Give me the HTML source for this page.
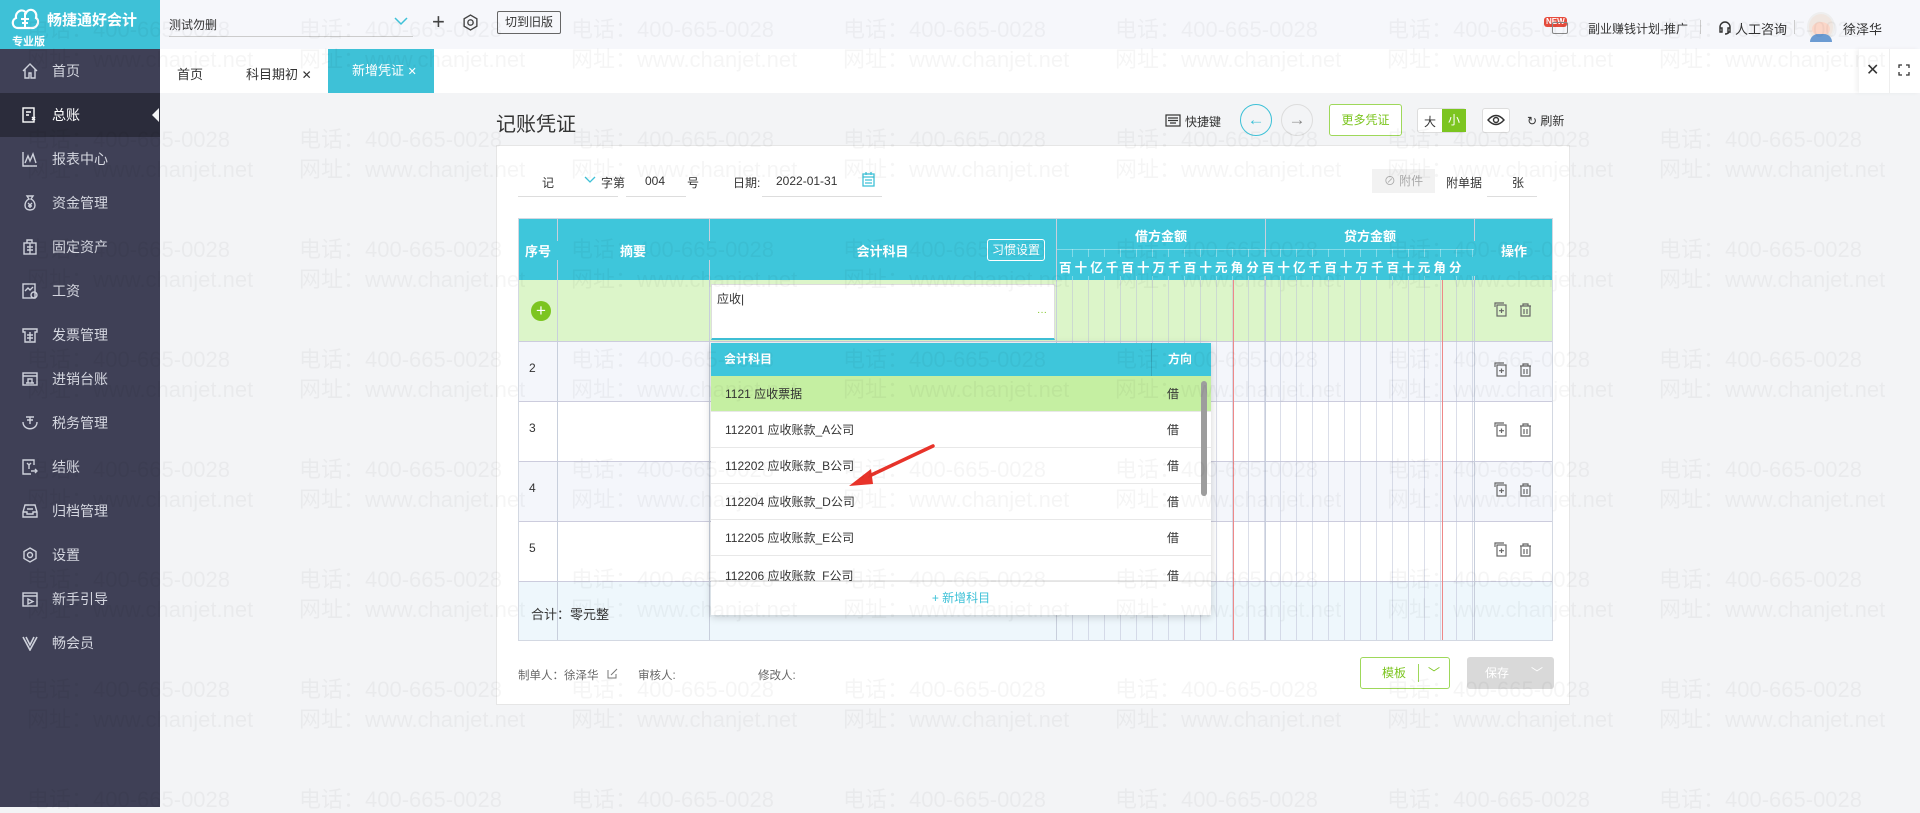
<!DOCTYPE html>
<html><head><meta charset="utf-8"><style>
*{margin:0;padding:0;box-sizing:border-box}
body{width:1920px;height:807px;overflow:hidden;background:#f3f4f6;font-family:"Liberation Sans","Noto Sans CJK SC",sans-serif;font-size:13px;color:#333;position:relative}
.a{position:absolute}
.side{left:0;top:0;width:160px;height:807px;background:#3f4056}
.logo{left:0;top:0;width:160px;height:49px;background:#3ec1d7;color:#fff}
.mi{position:absolute;left:0;width:160px;height:44px;color:#d5d7e0;font-size:14px;line-height:44px;padding-left:52px}
.mi svg{position:absolute;left:22px;top:14px}
.mi.act{background:#2b2c3b;color:#fff}
.top{left:160px;top:0;width:1760px;height:49px;background:#f6f7fb}
.tabs{left:160px;top:49px;width:1760px;height:44px;background:#fff}
.card{left:496px;top:145px;width:1074px;height:560px;background:#fff;border:1px solid #e6e6e6}
.th{background:#3ec6db;color:#fff;font-weight:bold;font-size:13px;text-align:center}
.vl{position:absolute;top:0;bottom:0;width:1px;background:#d3d8e2}
.wr{position:absolute;left:27px;white-space:nowrap;pointer-events:none;color:rgba(0,0,0,0.04);font-size:22px;line-height:26px}
.wr span{display:inline-block;width:272px}
.dr{position:absolute;left:0;width:500px;height:36px;border-bottom:1px solid #e8e8e8;font-size:12px;line-height:36px;padding-left:14px}
.dr b{position:absolute;left:456px;font-weight:normal}
</style></head><body>

<div class="a side"></div>
<div class="a logo">
 <svg class="a" style="left:10px;top:4px" width="30" height="28" viewBox="0 0 30 28"><path d="M8 24 C2 24 1 16 6 14 C5 7 13 4 16 9 C19 3 28 6 26 14 C30 16 28 24 22 24 Z" fill="none" stroke="#fff" stroke-width="2.2"/><path d="M15 9 V24 M11 15 H19 M12 19 H18" stroke="#fff" stroke-width="2"/></svg>
 <div class="a" style="left:47px;top:9px;font-size:15px;font-weight:bold">畅捷通好会计</div>
 <div class="a" style="left:12px;top:33px;font-size:11px;font-weight:bold">专业版</div>
</div>
<div class="mi" style="top:49px"><svg width="16" height="16" viewBox="0 0 16 16" fill="none" stroke="#cfd2dc" stroke-width="1.4"><path d="M1 8 L8 1 L15 8 M3 6 V15 H7 V10 H9 V15 H13 V6"/></svg>首页</div>
<div class="mi act" style="top:93px"><svg width="16" height="16" viewBox="0 0 16 16" fill="none" stroke="#fff" stroke-width="1.4"><rect x="1" y="1" width="11" height="14"/><path d="M4 5H9M4 8H7M10 10l3 3M13 10l-3 3"/></svg>总账</div>
<div class="a" style="left:152px;top:108px;width:0;height:0;border:7px solid transparent;border-right-color:#f3f4f6;border-left:0"></div>
<div class="mi" style="top:137px"><svg width="16" height="16" viewBox="0 0 16 16" fill="none" stroke="#cfd2dc" stroke-width="1.4"><path d="M1 1V15H15M3 12L6 5L8 10L11 3L14 12"/></svg>报表中心</div>
<div class="mi" style="top:181px"><svg width="16" height="16" viewBox="0 0 16 16" fill="none" stroke="#cfd2dc" stroke-width="1.4"><path d="M5 1H11L9 4C14 6 15 15 8 15C1 15 2 6 7 4Z M6 8L8 10L10 8M8 10V13M6 11H10"/></svg>资金管理</div>
<div class="mi" style="top:225px"><svg width="16" height="16" viewBox="0 0 16 16" fill="none" stroke="#cfd2dc" stroke-width="1.4"><rect x="2" y="4" width="12" height="11"/><path d="M5 4V1H10V4M5 8H11M5 11H11M8 4V15"/></svg>固定资产</div>
<div class="mi" style="top:269px"><svg width="16" height="16" viewBox="0 0 16 16" fill="none" stroke="#cfd2dc" stroke-width="1.4"><rect x="1" y="1" width="12" height="14"/><path d="M3 8L6 5L8 7L11 4"/><circle cx="12" cy="12" r="3"/></svg>工资</div>
<div class="mi" style="top:313px"><svg width="16" height="16" viewBox="0 0 16 16" fill="none" stroke="#cfd2dc" stroke-width="1.4"><path d="M1 2H15V5H13V15H3V5H1Z M5 8H11M5 11H11M8 5V14"/></svg>发票管理</div>
<div class="mi" style="top:357px"><svg width="16" height="16" viewBox="0 0 16 16" fill="none" stroke="#cfd2dc" stroke-width="1.4"><rect x="1" y="2" width="14" height="12"/><path d="M1 5H15M4 12H12M6 12V8H10V12"/></svg>进销台账</div>
<div class="mi" style="top:401px"><svg width="16" height="16" viewBox="0 0 16 16" fill="none" stroke="#cfd2dc" stroke-width="1.4"><path d="M1 7C1 16 15 16 15 7M4 2H12M8 2V9M5 5H11"/></svg>税务管理</div>
<div class="mi" style="top:445px"><svg width="16" height="16" viewBox="0 0 16 16" fill="none" stroke="#cfd2dc" stroke-width="1.4"><path d="M12 6V1H1V15H9M5 4L7 6L9 4M7 6V10M9 12H15M13 10L15 12L13 14"/></svg>结账</div>
<div class="mi" style="top:489px"><svg width="16" height="16" viewBox="0 0 16 16" fill="none" stroke="#cfd2dc" stroke-width="1.4"><path d="M3 2H13L15 9V14H1V9Z M1 9H5V11H11V9H15M5 6H11"/></svg>归档管理</div>
<div class="mi" style="top:533px"><svg width="16" height="16" viewBox="0 0 16 16" fill="none" stroke="#cfd2dc" stroke-width="1.4"><path d="M8 1L14 4.5V11.5L8 15L2 11.5V4.5Z"/><circle cx="8" cy="8" r="2.5"/></svg>设置</div>
<div class="mi" style="top:577px"><svg width="16" height="16" viewBox="0 0 16 16" fill="none" stroke="#cfd2dc" stroke-width="1.4"><rect x="1" y="2" width="14" height="13"/><path d="M1 5H15M6 8V13L11 10.5Z"/></svg>新手引导</div>
<div class="mi" style="top:621px"><svg width="16" height="16" viewBox="0 0 16 16" fill="none" stroke="#cfd2dc" stroke-width="1.6"><path d="M1 2L8 15L15 2M4 2L8 10L12 2"/></svg>畅会员</div>

<div class="a top"></div>
<div class="a" style="left:169px;top:16px;font-size:12px">测试勿删</div>
<div class="a" style="left:169px;top:36px;width:244px;height:1px;background:#ccc"></div>
<svg class="a" style="left:394px;top:16px" width="14" height="10" viewBox="0 0 14 10"><path d="M1 2L7 8L13 2" fill="none" stroke="#3ec1d7" stroke-width="1.5"/></svg>
<div class="a" style="left:432px;top:9px;font-size:22px;color:#444;font-weight:300">+</div>
<svg class="a" style="left:462px;top:14px" width="17" height="17" viewBox="0 0 16 16" fill="none" stroke="#444" stroke-width="1.3"><path d="M8 1L14 4.5V11.5L8 15L2 11.5V4.5Z"/><circle cx="8" cy="8" r="2.5"/></svg>
<div class="a" style="left:497px;top:11px;width:64px;height:23px;border:1px solid #666;border-radius:2px;font-size:12px;line-height:21px;text-align:center">切到旧版</div>

<div class="a" style="left:1544px;top:17px;background:#e64b3c;color:#fff;font-size:8px;font-weight:bold;padding:0 2px;border-radius:3px;line-height:10px">NEW</div>
<div class="a" style="left:1552px;top:22px;width:16px;height:12px;border:1.5px solid #888;border-radius:2px"></div>
<div class="a" style="left:1588px;top:20px;font-size:12px;color:#333">副业赚钱计划-推广</div>
<div class="a" style="left:1700px;top:20px;width:1px;height:14px;background:#ccc"></div>
<svg class="a" style="left:1718px;top:21px" width="14" height="14" viewBox="0 0 14 14" fill="none" stroke="#333" stroke-width="1.4"><path d="M2 8V6A5 5 0 0 1 12 6V8M2 7H4V11H2ZM10 7H12V11H10Z M11 11Q10 13 7 13"/></svg>
<div class="a" style="left:1735px;top:19px;font-size:13px">人工咨询</div>
<div class="a" style="left:1794px;top:20px;width:1px;height:14px;background:#ccc"></div>
<div class="a" style="left:1807px;top:12px;width:28px;height:30px;border-radius:50%;background:#f0e6e0;border:2px solid #eee"></div>
<div class="a" style="left:1812px;top:22px;width:18px;height:14px;border-radius:50%;background:#fbd6c8"></div>
<div class="a" style="left:1810px;top:34px;width:22px;height:8px;border-radius:8px 8px 0 0;background:#6b9bd2"></div>
<div class="a" style="left:1843px;top:19px;font-size:13px">徐泽华</div>

<div class="a tabs"></div>
<div class="a" style="left:177px;top:64px;font-size:13px">首页</div>
<div class="a" style="left:246px;top:64px;font-size:13px">科目期初 <span style="font-size:12px">✕</span></div>
<div class="a" style="left:328px;top:49px;width:106px;height:44px;background:#3ec1d7;color:#fff;font-size:13px;line-height:44px;padding-left:24px">新增凭证 <span style="font-size:11px">✕</span></div>
<div class="a" style="left:1859px;top:49px;width:61px;height:44px;background:#fff;box-shadow:-3px 0 4px rgba(0,0,0,0.05)"></div>
<div class="a" style="left:1889px;top:49px;width:1px;height:44px;background:#eee"></div>
<div class="a" style="left:1866px;top:60px;font-size:16px;color:#333">✕</div>
<svg class="a" style="left:1898px;top:64px" width="12" height="12" viewBox="0 0 12 12" fill="none" stroke="#333" stroke-width="1.3"><path d="M1 4V1H4M8 1H11V4M11 8V11H8M4 11H1V8"/></svg>

<div class="a" style="left:496px;top:108px;font-size:20px;color:#333">记账凭证</div>
<svg class="a" style="left:1165px;top:114px" width="16" height="13" viewBox="0 0 16 13" fill="none" stroke="#333" stroke-width="1.2"><rect x="1" y="1" width="14" height="11"/><path d="M3 4H13M3 6.5H13M5 9H11"/></svg>
<div class="a" style="left:1185px;top:113px;font-size:12px">快捷键</div>
<div class="a" style="left:1240px;top:104px;width:32px;height:32px;border:1.5px solid #3ec1d7;border-radius:50%;color:#3ec1d7;text-align:center;line-height:29px;font-size:17px">←</div>
<div class="a" style="left:1281px;top:104px;width:32px;height:32px;border:1px solid #ddd;border-radius:50%;color:#888;text-align:center;line-height:30px;font-size:17px">→</div>
<div class="a" style="left:1329px;top:104px;width:73px;height:32px;border:1px solid #9ed85a;border-radius:3px;color:#7cc520;text-align:center;line-height:30px;font-size:12px;background:#fff">更多凭证</div>
<div class="a" style="left:1417px;top:108px;width:49px;height:25px;border:1px solid #ddd;border-radius:3px;background:#fff;font-size:12px"><span class="a" style="left:6px;top:4px">大</span><span class="a" style="left:24px;top:0;width:24px;height:23px;background:#7cc520;color:#fff;text-align:center;line-height:23px">小</span></div>
<div class="a" style="left:1482px;top:108px;width:28px;height:25px;border:1px solid #ddd;border-radius:3px;background:#fff"></div>
<svg class="a" style="left:1487px;top:114px" width="18" height="12" viewBox="0 0 18 12" fill="none" stroke="#333" stroke-width="1.4"><path d="M1 6Q9 -3 17 6Q9 15 1 6Z"/><circle cx="9" cy="6" r="2.5"/></svg>
<div class="a" style="left:1527px;top:112px;font-size:12px">↻ 刷新</div>

<div class="a card"></div>
<div class="a" style="left:542px;top:174px;font-size:12px">记</div>
<svg class="a" style="left:584px;top:176px" width="12" height="8"><path d="M1 1L6 6L11 1" fill="none" stroke="#3ec1d7" stroke-width="1.3"/></svg>
<div class="a" style="left:601px;top:174px;font-size:12px">字第</div>
<div class="a" style="left:645px;top:174px;font-size:12px">004</div>
<div class="a" style="left:687px;top:174px;font-size:12px">号</div>
<div class="a" style="left:733px;top:174px;font-size:12px">日期:</div>
<div class="a" style="left:776px;top:174px;font-size:12px">2022-01-31</div>
<svg class="a" style="left:862px;top:172px" width="13" height="15" viewBox="0 0 13 15" fill="none" stroke="#3ec1d7" stroke-width="1.3"><rect x="1" y="2" width="11" height="12"/><path d="M1 5H12M4 0V3M9 0V3M3 8H10M3 11H10"/></svg>
<div class="a" style="left:518px;top:196px;width:100px;height:1px;background:#ddd"></div>
<div class="a" style="left:626px;top:196px;width:60px;height:1px;background:#ddd"></div>
<div class="a" style="left:762px;top:196px;width:120px;height:1px;background:#ddd"></div>
<div class="a" style="left:1372px;top:169px;width:63px;height:24px;background:#f2f2f2;color:#aaa;font-size:12px;line-height:24px;text-align:center">⊘ 附件</div>
<div class="a" style="left:1446px;top:174px;font-size:12px">附单据</div>
<div class="a" style="left:1512px;top:174px;font-size:12px">张</div>
<div class="a" style="left:1487px;top:196px;width:50px;height:1px;background:#ddd"></div>

<!-- table -->
<div class="a" style="left:518px;top:218px;width:1035px;height:423px;border:1px solid #d3d8e2;background:#fff;overflow:hidden">
 <div class="a th" style="left:0;top:0;width:1035px;height:61px"></div>
 <div class="a" style="left:0;top:61px;width:1035px;height:61px;background:#dcf5c9"></div>
 <div class="a" style="left:0;top:122px;width:1035px;height:60px;background:#f4f6fb;border-top:1px solid #ccd"></div>
 <div class="a" style="left:0;top:182px;width:1035px;height:60px;background:#fff;border-top:1px solid #ccd"></div>
 <div class="a" style="left:0;top:242px;width:1035px;height:60px;background:#f4f6fb;border-top:1px solid #ccd"></div>
 <div class="a" style="left:0;top:302px;width:1035px;height:60px;background:#fff;border-top:1px solid #ccd"></div>
 <div class="a" style="left:0;top:362px;width:1035px;height:61px;background:#eef7fc;border-top:1px solid #ccd"></div>
 <div class="a" style="left:538px;top:61px;width:418px;height:362px;background:repeating-linear-gradient(to right,transparent 0 15px,rgba(190,195,215,0.55) 15px 16px)"></div>
 <div class="a" style="left:538px;top:30px;width:418px;height:31px;background:repeating-linear-gradient(to right,transparent 0 15px,rgba(255,255,255,0.35) 15px 16px)"></div>
 <div class="a" style="left:538px;top:30px;width:418px;height:1px;background:rgba(255,255,255,0.35)"></div>
 <div class="a" style="left:714px;top:61px;width:1px;height:362px;background:#e88"></div>
 <div class="a" style="left:923px;top:61px;width:1px;height:362px;background:#e88"></div>
 <div class="vl" style="left:38px;background:#c8cfdc"></div>
 <div class="vl" style="left:190px;background:#c8cfdc"></div>
 <div class="vl" style="left:537px;background:#c8cfdc"></div>
 <div class="vl" style="left:746px;background:#c8cfdc"></div>
 <div class="vl" style="left:955px;background:#c8cfdc"></div>
 <div class="a th" style="left:0;top:22px;width:38px">序号</div>
 <div class="a th" style="left:38px;top:22px;width:152px">摘要</div>
 <div class="a th" style="left:190px;top:22px;width:347px">会计科目</div>
 <div class="a" style="left:468px;top:20px;width:58px;height:22px;border:1px solid #fff;border-radius:3px;color:#fff;font-size:12px;line-height:20px;text-align:center">习惯设置</div>
 <div class="a th" style="left:538px;top:7px;width:208px">借方金额</div>
 <div class="a th" style="left:747px;top:7px;width:208px">贷方金额</div>
 <div class="a th" style="left:955px;top:22px;width:80px">操作</div>
 <div class="a th" style="left:538px;top:38px;width:418px;font-size:12.5px;letter-spacing:3.1px;text-align:left;padding-left:2px;white-space:nowrap">百十亿千百十万千百十元角分百十亿千百十万千百十元角分</div>
 <div class="a" style="left:192px;top:65px;width:344px;height:56px;background:#fff;border:1px solid #ddd;border-bottom:2px solid #3ec1d7"></div>
 <div class="a" style="left:198px;top:71px;font-size:12px">应收|</div>
 <div class="a" style="left:518px;top:88px;font-size:10px;color:#7cc520">···</div>
 <div class="a" style="left:12px;top:82px;width:20px;height:20px;border-radius:50%;background:#7cc520;color:#fff;text-align:center;line-height:19px;font-size:17px">+</div>
 <div class="a" style="left:10px;top:142px;font-size:12px">2</div>
 <div class="a" style="left:10px;top:202px;font-size:12px">3</div>
 <div class="a" style="left:10px;top:262px;font-size:12px">4</div>
 <div class="a" style="left:10px;top:322px;font-size:12px">5</div>
 <div class="a" style="left:12px;top:385px;font-size:13px">合计：零元整</div>
</div>
<!-- row icons -->
<svg class="a" style="left:1494px;top:302px" width="40" height="260" viewBox="0 0 40 260" fill="none" stroke="#666" stroke-width="1.2">
 <g id="ri"><rect x="3" y="3" width="9" height="11"/><path d="M1 5V1H10M7.5 6.5V11M5 8.7H10"/><path d="M26 4H37M29 4V2H34V4M27 4V14H36V4M30 7V12M33 7V12"/></g>
 <use href="#ri" y="60"/><use href="#ri" y="120"/><use href="#ri" y="180"/><use href="#ri" y="240"/>
</svg>

<!-- dropdown -->
<div class="a" style="left:711px;top:343px;width:500px;height:272px;background:#fff;box-shadow:0 2px 8px rgba(0,0,0,0.18);overflow:hidden">
 <div class="a" style="left:0;top:0;width:500px;height:33px;background:#3ec6db;color:#fff;font-weight:bold;font-size:12px;line-height:33px;padding-left:13px">会计科目<span class="a" style="left:440px;top:0;width:1px;height:33px;background:#36a9bd"></span><span class="a" style="left:457px">方向</span></div>
 <div class="dr" style="top:33px;background:#c5efa2">1121 应收票据<b>借</b></div>
 <div class="dr" style="top:69px">112201 应收账款_A公司<b>借</b></div>
 <div class="dr" style="top:105px">112202 应收账款_B公司<b>借</b></div>
 <div class="dr" style="top:141px">112204 应收账款_D公司<b>借</b></div>
 <div class="dr" style="top:177px">112205 应收账款_E公司<b>借</b></div>
 <div class="dr" style="top:213px;height:25px;line-height:40px">112206 应收账款_F公司<b>借</b></div>
 <div class="a" style="left:0;top:238px;width:500px;height:34px;background:#fff;border-top:1px solid #e4e4e4;color:#3ec1d7;font-size:12px;text-align:center;line-height:32px">+ 新增科目</div>
 <div class="a" style="left:490px;top:38px;width:6px;height:115px;border-radius:3px;background:#9d9d9d"></div>
</div>
<svg class="a" style="left:845px;top:444px" width="95" height="48" viewBox="0 0 95 48"><path d="M88 2 L20 34" stroke="#e8332a" stroke-width="3.5" stroke-linecap="round"/><path d="M4 42 L26 25 L28 40 Z" fill="#e8332a"/></svg>

<div class="a" style="left:518px;top:667px;font-size:11.5px;color:#666">制单人：徐泽华</div>
<svg class="a" style="left:607px;top:668px" width="11" height="11" viewBox="0 0 11 11" fill="none" stroke="#777" stroke-width="1"><path d="M1 2V10H9V6M4 7L10 1"/></svg>
<div class="a" style="left:638px;top:667px;font-size:11.5px;color:#666">审核人:</div>
<div class="a" style="left:758px;top:667px;font-size:11.5px;color:#666">修改人:</div>
<div class="a" style="left:1360px;top:657px;width:90px;height:32px;border:1px solid #9ed85a;border-radius:3px;background:#fff;color:#7cc520;font-size:12px;line-height:30px"><span style="margin-left:21px">模板</span><span class="a" style="left:57px;top:6px;width:1px;height:18px;background:#9ed85a"></span><span class="a" style="left:67px;top:0">﹀</span></div>
<div class="a" style="left:1467px;top:657px;width:87px;height:32px;border-radius:3px;background:#d9d9d9;color:#fff;font-size:12px;line-height:32px"><span style="margin-left:18px">保存</span><span class="a" style="left:64px;top:0">﹀</span></div>

<!-- watermarks -->
<div class="wr" style="top:17px"><span>电话：400-665-0028</span><span>电话：400-665-0028</span><span>电话：400-665-0028</span><span>电话：400-665-0028</span><span>电话：400-665-0028</span><span>电话：400-665-0028</span><span>电话：400-665-0028</span></div>
<div class="wr" style="top:47px"><span>网址：www.chanjet.net</span><span>网址：www.chanjet.net</span><span>网址：www.chanjet.net</span><span>网址：www.chanjet.net</span><span>网址：www.chanjet.net</span><span>网址：www.chanjet.net</span><span>网址：www.chanjet.net</span></div>
<div class="wr" style="top:127px"><span>电话：400-665-0028</span><span>电话：400-665-0028</span><span>电话：400-665-0028</span><span>电话：400-665-0028</span><span>电话：400-665-0028</span><span>电话：400-665-0028</span><span>电话：400-665-0028</span></div>
<div class="wr" style="top:157px"><span>网址：www.chanjet.net</span><span>网址：www.chanjet.net</span><span>网址：www.chanjet.net</span><span>网址：www.chanjet.net</span><span>网址：www.chanjet.net</span><span>网址：www.chanjet.net</span><span>网址：www.chanjet.net</span></div>
<div class="wr" style="top:237px"><span>电话：400-665-0028</span><span>电话：400-665-0028</span><span>电话：400-665-0028</span><span>电话：400-665-0028</span><span>电话：400-665-0028</span><span>电话：400-665-0028</span><span>电话：400-665-0028</span></div>
<div class="wr" style="top:267px"><span>网址：www.chanjet.net</span><span>网址：www.chanjet.net</span><span>网址：www.chanjet.net</span><span>网址：www.chanjet.net</span><span>网址：www.chanjet.net</span><span>网址：www.chanjet.net</span><span>网址：www.chanjet.net</span></div>
<div class="wr" style="top:347px"><span>电话：400-665-0028</span><span>电话：400-665-0028</span><span>电话：400-665-0028</span><span>电话：400-665-0028</span><span>电话：400-665-0028</span><span>电话：400-665-0028</span><span>电话：400-665-0028</span></div>
<div class="wr" style="top:377px"><span>网址：www.chanjet.net</span><span>网址：www.chanjet.net</span><span>网址：www.chanjet.net</span><span>网址：www.chanjet.net</span><span>网址：www.chanjet.net</span><span>网址：www.chanjet.net</span><span>网址：www.chanjet.net</span></div>
<div class="wr" style="top:457px"><span>电话：400-665-0028</span><span>电话：400-665-0028</span><span>电话：400-665-0028</span><span>电话：400-665-0028</span><span>电话：400-665-0028</span><span>电话：400-665-0028</span><span>电话：400-665-0028</span></div>
<div class="wr" style="top:487px"><span>网址：www.chanjet.net</span><span>网址：www.chanjet.net</span><span>网址：www.chanjet.net</span><span>网址：www.chanjet.net</span><span>网址：www.chanjet.net</span><span>网址：www.chanjet.net</span><span>网址：www.chanjet.net</span></div>
<div class="wr" style="top:567px"><span>电话：400-665-0028</span><span>电话：400-665-0028</span><span>电话：400-665-0028</span><span>电话：400-665-0028</span><span>电话：400-665-0028</span><span>电话：400-665-0028</span><span>电话：400-665-0028</span></div>
<div class="wr" style="top:597px"><span>网址：www.chanjet.net</span><span>网址：www.chanjet.net</span><span>网址：www.chanjet.net</span><span>网址：www.chanjet.net</span><span>网址：www.chanjet.net</span><span>网址：www.chanjet.net</span><span>网址：www.chanjet.net</span></div>
<div class="wr" style="top:677px"><span>电话：400-665-0028</span><span>电话：400-665-0028</span><span>电话：400-665-0028</span><span>电话：400-665-0028</span><span>电话：400-665-0028</span><span>电话：400-665-0028</span><span>电话：400-665-0028</span></div>
<div class="wr" style="top:707px"><span>网址：www.chanjet.net</span><span>网址：www.chanjet.net</span><span>网址：www.chanjet.net</span><span>网址：www.chanjet.net</span><span>网址：www.chanjet.net</span><span>网址：www.chanjet.net</span><span>网址：www.chanjet.net</span></div>
<div class="wr" style="top:787px"><span>电话：400-665-0028</span><span>电话：400-665-0028</span><span>电话：400-665-0028</span><span>电话：400-665-0028</span><span>电话：400-665-0028</span><span>电话：400-665-0028</span><span>电话：400-665-0028</span></div>
</body></html>
